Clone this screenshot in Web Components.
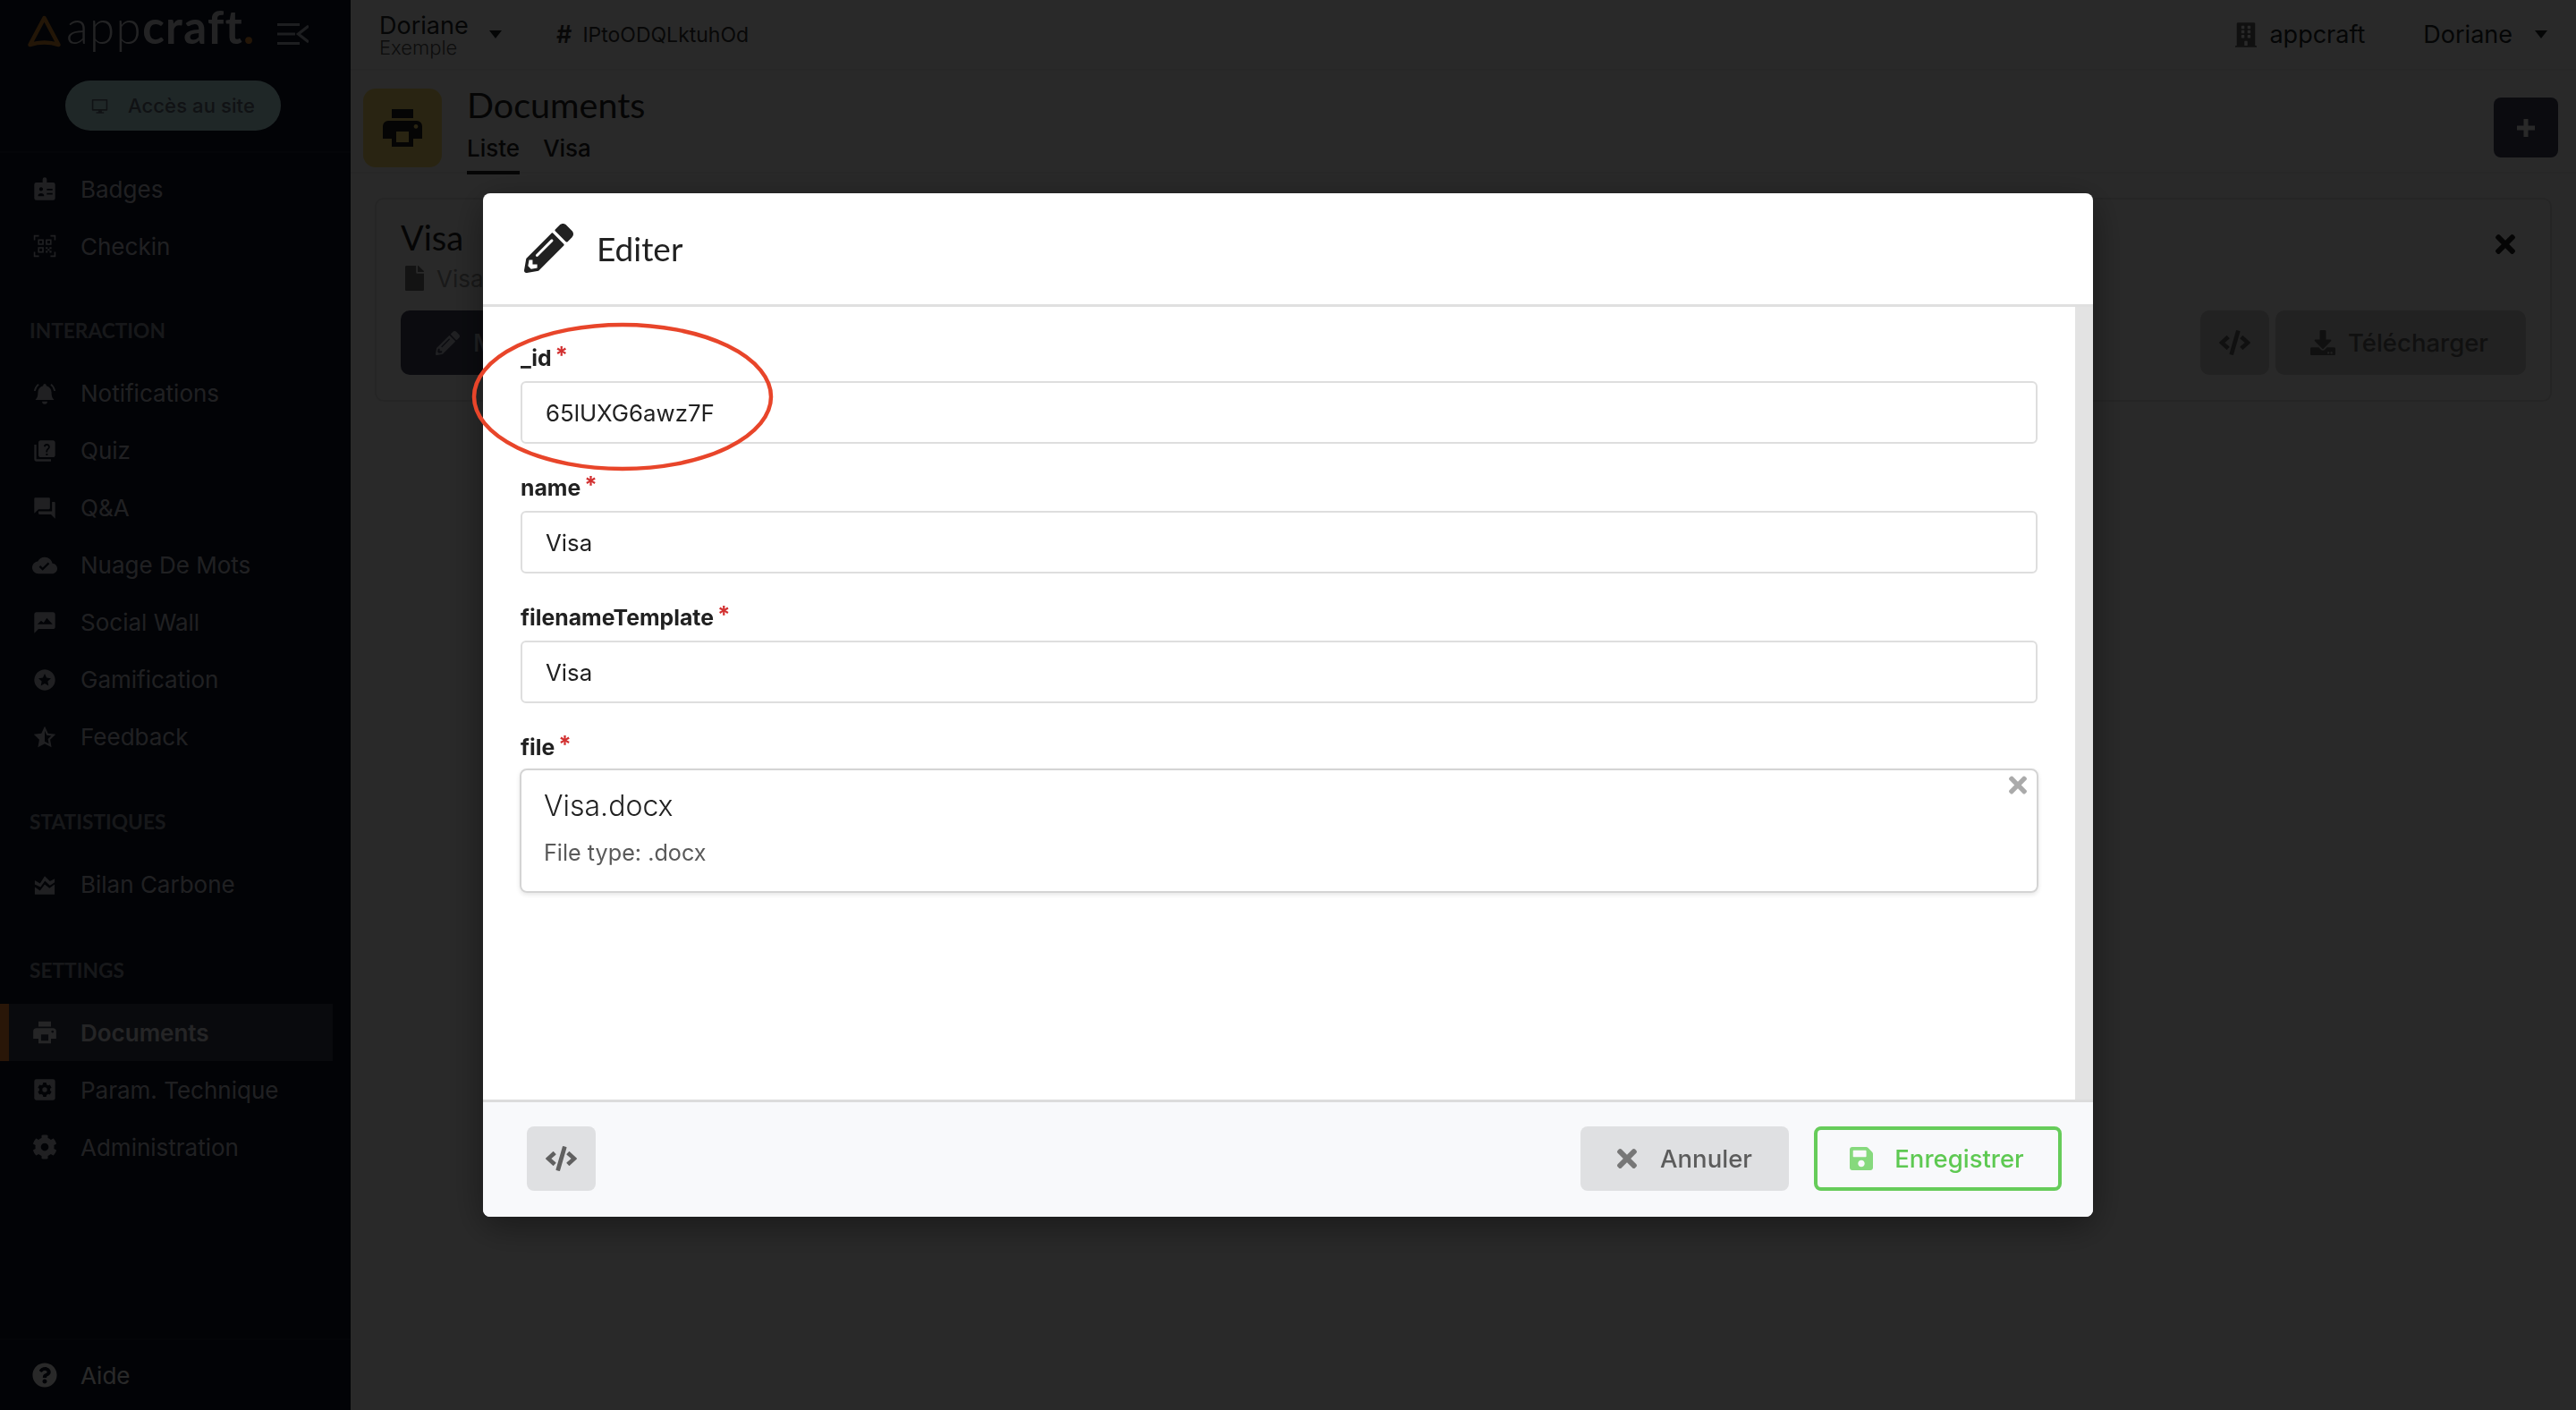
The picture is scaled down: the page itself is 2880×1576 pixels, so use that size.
<!DOCTYPE html>
<html lang="fr">
<head>
<meta charset="utf-8">
<title>Documents - appcraft</title>
<style>
  html, body { margin: 0; height: 100%; background: #fcfcfc; font-family: Inter, "Liberation Sans", sans-serif; }
</style>
</head>
<body>
<app-shell>
  <app-sidebar slot="sidebar">
    <nav-item icon="badge">Badges</nav-item>
    <nav-item icon="qr">Checkin</nav-item>
    <nav-section>INTERACTION</nav-section>
    <nav-item icon="bell">Notifications</nav-item>
    <nav-item icon="quiz">Quiz</nav-item>
    <nav-item icon="qa">Q&amp;A</nav-item>
    <nav-item icon="cloud">Nuage De Mots</nav-item>
    <nav-item icon="wall">Social Wall</nav-item>
    <nav-item icon="starcircle">Gamification</nav-item>
    <nav-item icon="starhalf">Feedback</nav-item>
    <nav-section>STATISTIQUES</nav-section>
    <nav-item icon="chart">Bilan Carbone</nav-item>
    <nav-section style="margin-top: 1.500px">SETTINGS</nav-section>
    <nav-item icon="print" active>Documents</nav-item>
    <nav-item icon="param">Param. Technique</nav-item>
    <nav-item icon="cog">Administration</nav-item>
    <nav-item icon="help" slot="footer" bright>Aide</nav-item>
  </app-sidebar>
  <top-bar></top-bar>
  <page-header></page-header>
  <doc-card></doc-card>
</app-shell>
<edit-modal>
  <form-field label="_id" value="65lUXG6awz7F"></form-field>
  <form-field label="name" value="Visa"></form-field>
  <form-field label="filenameTemplate" value="Visa"></form-field>
  <form-field label="file" filename="Visa.docx" filetype="File type: .docx"></form-field>
</edit-modal>

<script>
// icon set, viewBox first then the shapes
const ICONS = {
  times: ['0 0 352 512', '<path d="M242.72 256l100.07-100.07c12.28-12.28 12.28-32.19 0-44.48l-22.24-22.24c-12.28-12.28-32.19-12.28-44.48 0L176 189.28 75.93 89.21c-12.28-12.28-32.19-12.28-44.48 0L9.21 111.45c-12.28 12.28-12.28 32.19 0 44.48L109.28 256 9.21 356.07c-12.28 12.28-12.28 32.19 0 44.48l22.24 22.24c12.28 12.28 32.2 12.28 44.48 0L176 322.72l100.07 100.07c12.28 12.28 32.2 12.28 44.48 0l22.24-22.24c12.28-12.28 12.28-32.19 0-44.48L242.72 256z"/>'],
  pencil: ['0 0 512 512', '<path d="M497.9 142.1l-46.1 46.1c-4.7 4.7-12.3 4.7-17 0l-111-111c-4.7-4.7-4.7-12.3 0-17l46.1-46.1c18.7-18.7 49.1-18.7 67.9 0l60.1 60.1c18.8 18.7 18.8 49.1 0 67.9zM284.2 99.8L21.6 362.4.4 483.9c-2.9 16.4 11.4 30.6 27.8 27.8l121.5-21.3 262.6-262.6c4.7-4.7 4.7-12.3 0-17l-111-111c-4.8-4.7-12.4-4.7-17.1 0zM124.1 339.9c-5.5-5.5-5.5-14.3 0-19.8l154-154c5.5-5.5 14.3-5.5 19.8 0s5.5 14.3 0 19.8l-154 154c-5.5 5.5-14.3 5.5-19.8 0zM88 424h48v36.3l-64.5 11.3-31.1-31.1L51.7 376H88v48z"/>'],
  save: ['0 0 448 512', '<path d="M433.941 129.941l-83.882-83.882A48 48 0 0 0 316.118 32H48C21.49 32 0 53.49 0 80v352c0 26.51 21.49 48 48 48h352c26.51 0 48-21.49 48-48V163.882a48 48 0 0 0-14.059-33.941zM224 416c-35.346 0-64-28.654-64-64 0-35.346 28.654-64 64-64s64 28.654 64 64c0 35.346-28.654 64-64 64zm96-304.52V212c0 6.627-5.373 12-12 12H76c-6.627 0-12-5.373-12-12V108c0-6.627 5.373-12 12-12h228.52c3.183 0 6.235 1.264 8.485 3.515l3.48 3.48A11.996 11.996 0 0 1 320 111.48z"/>'],
  code: ['0 0 640 512', '<path d="M278.9 511.5l-61-17.7c-6.4-1.8-10-8.5-8.2-14.9L346.2 8.7c1.8-6.4 8.5-10 14.9-8.2l61 17.7c6.4 1.8 10 8.5 8.2 14.9L293.8 503.3c-1.9 6.4-8.5 10.1-14.9 8.2zm-114-112.2l43.5-46.4c4.6-4.9 4.3-12.7-.8-17.2L117 256l90.6-79.7c5.1-4.5 5.5-12.3.8-17.2l-43.5-46.4c-4.5-4.8-12.1-5.1-17-.5L3.8 247.2c-5.1 4.7-5.1 12.8 0 17.5l144.1 135.1c4.9 4.6 12.5 4.4 17-.5zm327.2.6l144.1-135.1c5.1-4.7 5.1-12.8 0-17.5L492.1 112.1c-4.8-4.5-12.4-4.3-17 .5L431.6 159c-4.6 4.9-4.3 12.7.8 17.2L523 256l-90.6 79.7c-5.1 4.5-5.5 12.3-.8 17.2l43.5 46.4c4.5 4.9 12.1 5.1 17 .6z"/>'],
  download: ['0 0 512 512', '<path d="M216 0h80c13.3 0 24 10.7 24 24v168h87.7c17.8 0 26.7 21.5 14.1 34.1L269.7 378.3c-7.5 7.5-19.8 7.5-27.3 0L90.1 226.1c-12.6-12.6-3.7-34.1 14.1-34.1H192V24c0-13.3 10.7-24 24-24zm296 376v112c0 13.3-10.7 24-24 24H24c-13.3 0-24-10.7-24-24V376c0-13.3 10.7-24 24-24h146.7l49 49c20.1 20.1 52.5 20.1 72.6 0l49-49H488c13.3 0 24 10.7 24 24zm-124 88c0-11-9-20-20-20s-20 9-20 20 9 20 20 20 20-9 20-20zm64 0c0-11-9-20-20-20s-20 9-20 20 9 20 20 20 20-9 20-20z"/>'],
  help: ['0 0 512 512', '<path d="M504 256c0 136.997-111.043 248-248 248S8 392.997 8 256C8 119.083 119.043 8 256 8s248 111.083 248 248zM262.655 90c-54.497 0-89.255 22.957-116.549 63.758-3.536 5.286-2.353 12.415 2.715 16.258l34.699 26.31c5.205 3.947 12.621 3.008 16.665-2.122 17.864-22.658 30.113-35.797 57.303-35.797 20.429 0 45.698 13.148 45.698 32.958 0 14.976-12.363 22.667-32.534 33.976C247.128 238.528 216 254.941 216 296v4c0 6.627 5.373 12 12 12h56c6.627 0 12-5.373 12-12v-1.333c0-28.462 83.186-29.647 83.186-106.667 0-58.002-60.165-102-116.531-102zM256 338c-25.365 0-46 20.635-46 46 0 25.364 20.635 46 46 46s46-20.636 46-46c0-25.365-20.635-46-46-46z"/>'],
  cog: ['0 0 512 512', '<path d="M487.4 315.7l-42.6-24.6c4.3-23.2 4.3-47 0-70.2l42.6-24.6c4.9-2.8 7.1-8.6 5.5-14-11.1-35.6-30-67.8-54.7-94.6-3.8-4.1-10-5.1-14.8-2.3L380.8 110c-17.9-15.4-38.5-27.3-60.8-35.1V25.8c0-5.6-3.9-10.5-9.4-11.7-36.7-8.2-74.3-7.8-109.2 0-5.5 1.2-9.4 6.1-9.4 11.7V75c-22.2 7.9-42.8 19.8-60.8 35.1L88.7 85.5c-4.9-2.8-11-1.9-14.8 2.3-24.7 26.7-43.6 58.9-54.7 94.6-1.7 5.4.6 11.2 5.5 14L67.3 221c-4.3 23.2-4.3 47 0 70.2l-42.6 24.6c-4.9 2.8-7.1 8.6-5.5 14 11.1 35.6 30 67.8 54.7 94.6 3.8 4.1 10 5.1 14.8 2.3l42.6-24.6c17.9 15.4 38.5 27.3 60.8 35.1v49.2c0 5.6 3.9 10.5 9.4 11.7 36.7 8.2 74.3 7.8 109.2 0 5.5-1.2 9.4-6.1 9.4-11.7v-49.2c22.2-7.9 42.8-19.8 60.8-35.1l42.6 24.6c4.9 2.8 11 1.9 14.8-2.3 24.7-26.7 43.6-58.9 54.7-94.6 1.5-5.5-.7-11.3-5.6-14.1zM256 336c-44.1 0-80-35.9-80-80s35.9-80 80-80 80 35.9 80 80-35.9 80-80 80z"/>'],
  file: ['0 0 384 512', '<path d="M224 136V0H24C10.7 0 0 10.7 0 24v464c0 13.3 10.7 24 24 24h336c13.3 0 24-10.7 24-24V160H248c-13.2 0-24-10.8-24-24zm160-14.1v6.1H256V0h6.1c6.4 0 12.5 2.5 17 7l97.9 98c4.5 4.5 7 10.6 7 16.9z"/>'],
  building: ['0 0 448 512', '<path d="M436 480h-20V24c0-13.255-10.745-24-24-24H56C42.745 0 32 10.745 32 24v456H12c-6.627 0-12 5.373-12 12v20h448v-20c0-6.627-5.373-12-12-12zM128 76c0-6.627 5.373-12 12-12h40c6.627 0 12 5.373 12 12v40c0 6.627-5.373 12-12 12h-40c-6.627 0-12-5.373-12-12V76zm0 96c0-6.627 5.373-12 12-12h40c6.627 0 12 5.373 12 12v40c0 6.627-5.373 12-12 12h-40c-6.627 0-12-5.373-12-12v-40zm52 148h-40c-6.627 0-12-5.373-12-12v-40c0-6.627 5.373-12 12-12h40c6.627 0 12 5.373 12 12v40c0 6.627-5.373 12-12 12zm76 160h-64v-84c0-6.627 5.373-12 12-12h40c6.627 0 12 5.373 12 12v84zm64-172c0 6.627-5.373 12-12 12h-40c-6.627 0-12-5.373-12-12v-40c0-6.627 5.373-12 12-12h40c6.627 0 12 5.373 12 12v40zm0-96c0 6.627-5.373 12-12 12h-40c-6.627 0-12-5.373-12-12v-40c0-6.627 5.373-12 12-12h40c6.627 0 12 5.373 12 12v40zm0-96c0 6.627-5.373 12-12 12h-40c-6.627 0-12-5.373-12-12V76c0-6.627 5.373-12 12-12h40c6.627 0 12 5.373 12 12v40z"/>'],
  plus: ['0 0 24 24', '<path d="M9.5 2h5v7.5H22v5h-7.5V22h-5v-7.5H2v-5h7.5z"/>'],
  print: ['0 0 24 24', '<path fill-rule="evenodd" d="M6 1.5h12v5H6zM4 8h16a3 3 0 0 1 3 3v7h-5v4.500H6V18H1v-7a3 3 0 0 1 3-3zM8.500 14v6h7v-6zM19.500 10a1.200 1.200 0 1 0 .01 0z"/>'],
  badge: ['0 0 24 24', '<path fill-rule="evenodd" d="M4 6h6V3a2 2 0 0 1 4 0v3h6a2 2 0 0 1 2 2v13a2 2 0 0 1-2 2H4a2 2 0 0 1-2-2V8a2 2 0 0 1 2-2zM8.500 10.500a1.800 1.800 0 1 0 .01 0zM5.500 19c0-3.500 6-3.500 6 0zM14 12h5.500v1.500H14zM14 16h5.500v1.500H14z"/>'],
  qr: ['0 0 24 24', '<path fill-rule="evenodd" d="M1.500 1.500h5v1.400H2.900v3.600H1.500zM22.500 1.500v5h-1.400V2.900h-3.600V1.500zM1.500 22.500v-5h1.400v3.600h3.600v1.400zM22.500 22.500h-5v-1.400h3.600v-3.600h1.400zM5.500 5.500h5.500V11H5.500zM6.900 6.900v2.700h2.700V6.900zM13 5.500h5.500V11H13zM14.400 6.900v2.700h2.700V6.900zM5.500 13H11v5.500H5.500zM6.900 14.400v2.700h2.700v-2.700zM13 13h1.800v1.800H13zM16.600 13h1.900v1.800h-1.900zM14.800 14.800h1.800v1.800h-1.800zM13 16.600h1.800v1.900H13zM16.600 16.600h1.900v1.900h-1.900z"/>'],
  bell: ['0 0 24 24', '<path d="M12 2.500A1.500 1.500 0 0 1 13.500 4v.4A6.500 6.500 0 0 1 18.500 11c0 4 1 5.500 2.500 7H3c1.500-1.500 2.500-3 2.500-7a6.500 6.500 0 0 1 5-6.600V4A1.500 1.500 0 0 1 12 2.500zM9.500 19.500h5a2.500 2.500 0 0 1-5 0zM5.500 2.500l1.100 1.100A9 9 0 0 0 3.200 9.500H1.700a10.500 10.500 0 0 1 3.800-7zM18.500 2.500l-1.100 1.100a9 9 0 0 1 3.400 5.900h1.500a10.500 10.500 0 0 0-3.800-7z"/>'],
  quiz: ['0 0 24 24', '<path fill-rule="evenodd" d="M4 6H2v14c0 1.100.9 2 2 2h14v-2H4zM20 2H8c-1.100 0-2 .9-2 2v12c0 1.100.9 2 2 2h12c1.100 0 2-.9 2-2V4c0-1.100-.9-2-2-2zM13.200 14.600h1.700v1.700h-1.700zM11 7.800a3 3 0 1 1 5 2.500c-.9.800-1.300 1.100-1.300 2.900h-1.600c0-2.200.7-2.900 1.700-3.800a1.400 1.400 0 1 0-2.200-1.300z"/>'],
  qa: ['0 0 24 24', '<path d="M21 6h-2v9H6v2c0 .55.45 1 1 1h11l4 4V7c0-.55-.45-1-1-1zm-4 6V3c0-.55-.45-1-1-1H3c-.55 0-1 .45-1 1v14l4-4h10c.55 0 1-.45 1-1z"/>'],
  cloud: ['0 0 24 24', '<path d="M19.350 10.040C18.670 6.590 15.640 4 12 4 9.110 4 6.600 5.640 5.350 8.040 2.340 8.360 0 10.910 0 14c0 3.310 2.690 6 6 6h13c2.760 0 5-2.240 5-5 0-2.640-2.050-4.780-4.650-4.960zM10 17l-3.500-3.500 1.410-1.410L10 14.170 15.180 9l1.410 1.410L10 17z"/>'],
  wall: ['0 0 24 24', '<path fill-rule="evenodd" d="M20 2H4c-1.100 0-2 .9-2 2v18l4-4h14c1.100 0 2-.9 2-2V4c0-1.100-.9-2-2-2zM5 13.500l3.500-3.500 2.500 2 3-4.500 5.500 6z"/>'],
  starcircle: ['0 0 24 24', '<path fill-rule="evenodd" d="M12 2a10 10 0 1 0 .01 0zM12 6l1.800 3.900 4.200.5-3.100 2.900.8 4.200-3.700-2.100-3.700 2.100.8-4.200L6 10.400l4.200-.5z"/>'],
  starhalf: ['0 0 24 24', '<path fill-rule="evenodd" d="M12 1.500l3.200 6.800 7.300 1-5.300 5.100 1.300 7.300-6.500-3.400-6.500 3.400 1.300-7.300-5.300-5.100 7.300-1zM12 5.700v10.400l3.900 2.100-.8-4.400 3.200-3.100-4.400-.6z"/>'],
  chart: ['0 0 24 24', '<path d="M2.500 22v-7l5 3.500 4.500-6 4.500 3.500 5-3.500V22zM2.500 12.500v-4l5 3 4.500-7 5 5 4.500-2.500v3.500l-4.500 3-4.800-4.500-4.200 6z"/>'],
  param: ['0 0 24 24', '<path d="M4 2h16a2 2 0 0 1 2 2v16a2 2 0 0 1-2 2H4a2 2 0 0 1-2-2V4a2 2 0 0 1 2-2z"/><path fill="#0d1325" transform="translate(5 5) scale(.0273)" d="M487.400 315.700l-42.600-24.600c4.300-23.200 4.300-47 0-70.200l42.600-24.600c4.900-2.800 7.100-8.600 5.500-14-11.100-35.600-30-67.800-54.700-94.600-3.800-4.100-10-5.100-14.800-2.300L380.800 110c-17.900-15.400-38.500-27.300-60.800-35.100V25.800c0-5.600-3.900-10.500-9.400-11.700-36.700-8.200-74.300-7.800-109.200 0-5.500 1.200-9.400 6.100-9.400 11.700V75c-22.200 7.900-42.800 19.800-60.800 35.100L88.700 85.500c-4.900-2.800-11-1.900-14.800 2.300-24.700 26.700-43.600 58.900-54.700 94.600-1.700 5.400.6 11.200 5.500 14L67.300 221c-4.300 23.200-4.300 47 0 70.200l-42.600 24.600c-4.900 2.800-7.100 8.600-5.500 14 11.100 35.600 30 67.800 54.700 94.600 3.800 4.100 10 5.100 14.800 2.300l42.600-24.600c17.900 15.400 38.500 27.300 60.800 35.100v49.200c0 5.600 3.900 10.500 9.400 11.700 36.700 8.200 74.300 7.800 109.200 0 5.500-1.200 9.400-6.100 9.400-11.700v-49.200c22.200-7.900 42.800-19.800 60.800-35.100l42.600 24.600c4.900 2.800 11 1.900 14.800-2.300 24.700-26.700 43.600-58.900 54.700-94.600 1.500-5.500-.7-11.300-5.600-14.100z"/><circle cx="12" cy="12" r="2.300"/>'],
  desktop: ['0 0 24 24', '<path fill-rule="evenodd" d="M2 2.500h20a1 1 0 0 1 1 1v14a1 1 0 0 1-1 1h-7v2h3v2H7v-2h3v-2H2a1 1 0 0 1-1-1v-14a1 1 0 0 1 1-1zM3 4.500v12h18v-12z"/>']
};

class UiIcon extends HTMLElement {
  constructor() {
    super();
    this.attachShadow({ mode: 'open' });
  }
  connectedCallback() {
    const [box, shapes] = ICONS[this.getAttribute('name')];
    const w = this.getAttribute('w') || 24;
    const h = this.getAttribute('h') || w;
    this.shadowRoot.innerHTML = `
      <style>
        :host { display: inline-flex; flex: none; line-height: 0; }
        svg { width: ${w}px; height: ${h}px; fill: currentColor; }
      </style>
      <svg viewBox="${box}" aria-hidden="true">${shapes}</svg>`;
  }
}

const shellTemplate = document.createElement('template');
shellTemplate.innerHTML = `
  <style>
    :host { display: grid; grid-template-columns: 392px 1fr; grid-template-rows: 79px 115px 1fr; height: 100vh; overflow: hidden; }
    ::slotted([slot="sidebar"]) { grid-row: 1 / 4; }
  </style>
  <slot name="sidebar"></slot>
  <slot></slot>
`;
class AppShell extends HTMLElement {
  constructor() {
    super();
    this.attachShadow({ mode: 'open' }).appendChild(shellTemplate.content.cloneNode(true));
  }
}

const sidebarTemplate = document.createElement('template');
sidebarTemplate.innerHTML = `
  <style>
    :host { display: flex; flex-direction: column; background: #0d1325; color: #c5c9d5; height: 1576px; box-sizing: border-box; }
    .head { height: 171px; box-sizing: border-box; border-bottom: 2px solid #1b2133; flex: none; }
    .brand { display: flex; align-items: flex-start; height: 90px; padding: 16px 0 0 30px; box-sizing: border-box; }
    .brand .mark { width: 39px; height: 39px; flex: none; }
    .word { font: 300 51px/44px Lato, sans-serif; color: #d8dae0; margin: -8px 0 0 5px; letter-spacing: 1.400px; white-space: nowrap; width: 236px; }
    .word b { font-weight: 700; }
    .word i { font-style: normal; font-weight: 700; color: #e08a30; }
    .burger { width: 35px; height: 24px; margin: 10px 0 0 0; flex: none; }
    .site { display: flex; align-items: center; width: 241px; height: 56px; margin-left: 73px; border-radius: 28px; background: #c3eef3; color: #66707e; font-size: 22px; font-weight: 500; box-sizing: border-box; padding-left: 29px; gap: 22px; white-space: nowrap; letter-spacing: .1px; }
    nav { flex: 1; padding-top: 8px; }
    .foot { height: 80px; flex: none; border-top: 2px solid #1b2133; box-sizing: border-box; padding-top: 7px; }
  </style>
  <div class="head">
    <div class="brand">
      <svg class="mark" viewBox="0 0 39 39"><path d="M19.500 4 L35.500 34 Q19.500 29 3.500 34 Z" fill="none" stroke="#d98a2c" stroke-width="4.500" stroke-linejoin="round"/></svg>
      <div class="word">app<b>craft</b><i>.</i></div>
      <svg class="burger" viewBox="0 0 35 24"><path d="M0 1.500h25M0 12h20M0 22.500h25M35 3 23.500 12 35 21" fill="none" stroke="#b4b8c6" stroke-width="3.200"/></svg>
    </div>
    <div class="site"><ui-icon name="desktop" w="19"></ui-icon>Accès au site</div>
  </div>
  <nav><slot></slot></nav>
  <div class="foot"><slot name="footer"></slot></div>
`;
class AppSidebar extends HTMLElement {
  constructor() {
    super();
    this.attachShadow({ mode: 'open' }).appendChild(sidebarTemplate.content.cloneNode(true));
  }
}

class NavSection extends HTMLElement {
  constructor() {
    super();
    this.attachShadow({ mode: 'open' }).innerHTML = `
      <style>
        :host { display: block; height: 100.500px; box-sizing: border-box; padding: 45px 0 0 33px; font: 700 22.700px/36px Lato, sans-serif; color: #8f93a1; }
      </style><slot></slot>`;
  }
}

class NavItem extends HTMLElement {
  constructor() {
    super();
    this.attachShadow({ mode: 'open' });
  }
  connectedCallback() {
    this.shadowRoot.innerHTML = `
      <style>
        :host { display: flex; align-items: center; height: 64px; width: 372px; box-sizing: border-box; padding-left: 36px; font-size: 26px; color: #c5c9d5; }
        :host([active]) { background: #383e51; box-shadow: inset 10px 0 0 #ff8a32; color: #e4e6ec; font-weight: 600; }
        :host([bright]) { color: #fff; }
        ui-icon { margin-right: 26px; }
      </style>
      <ui-icon name="${this.getAttribute('icon')}" w="28"></ui-icon><slot></slot>`;
  }
}

const topBarTemplate = document.createElement('template');
topBarTemplate.innerHTML = `
  <style>
    :host { display: flex; align-items: center; height: 79px; box-sizing: border-box; background: #fff; border-bottom: 2px solid #f2f2f2; padding: 0 32px; color: #212529; font-size: 27px; white-space: nowrap; }
    .who { display: flex; flex-direction: column; width: 123px; line-height: 30px; }
    .who small { font: 300 22px/22px Inter, sans-serif; color: #555; margin-top: -2px; }
    .caret { width: 0; height: 0; border: 7px solid transparent; border-top: 9px solid #212529; border-bottom: 0; }
    .ref { margin-left: 61px; font-size: 23px; color: #333; display: flex; align-items: center; gap: 12px; }
    .ref b { font-size: 27px; font-weight: 600; }
    .right { margin-left: auto; display: flex; align-items: center; }
    .right ui-icon { margin-right: 14px; color: #666; }
    .org { margin-right: 65px; }
    .right .caret { margin-left: 25px; }
  </style>
  <div class="who"><span>Doriane</span><small>Exemple</small></div>
  <span class="caret"></span>
  <span class="ref"><b>#</b><span>IPtoODQLktuhOd</span></span>
  <div class="right">
    <ui-icon name="building" w="24" h="28"></ui-icon><span class="org">appcraft</span>
    <span>Doriane</span><span class="caret"></span>
  </div>
`;
class TopBar extends HTMLElement {
  constructor() {
    super();
    this.attachShadow({ mode: 'open' }).appendChild(topBarTemplate.content.cloneNode(true));
  }
}

const headerTemplate = document.createElement('template');
headerTemplate.innerHTML = `
  <style>
    :host { display: flex; align-items: flex-start; height: 115px; box-sizing: border-box; padding: 20px 20px 0 14px; border-bottom: 2px solid #f2f2f2; background: #fff; color: #212121; }
    .tile { width: 88px; height: 88px; border-radius: 14px; background: #ffe16e; display: flex; align-items: center; justify-content: center; flex: none; color: #202020; }
    .text { margin-left: 28px; display: flex; flex-direction: column; }
    h1 { margin: -4px 0 0; font: 400 39.500px/44px Lato, sans-serif; }
    .tabs { display: flex; gap: 26px; margin-top: 9px; font-size: 26px; font-weight: 500; }
    .tabs span { display: block; height: 47px; line-height: 36px; box-sizing: border-box; }
    .tabs .on { border-bottom: 4px solid #212121; }
    .add { margin-left: auto; margin-top: 10px; width: 72px; height: 67px; background: #45475f; border-radius: 8px; color: #fff; display: flex; align-items: center; justify-content: center; }
  </style>
  <div class="tile"><ui-icon name="print" w="48"></ui-icon></div>
  <div class="text">
    <h1>Documents</h1>
    <div class="tabs"><span class="on">Liste</span><span>Visa</span></div>
  </div>
  <div class="add"><ui-icon name="plus" w="24"></ui-icon></div>
`;
class PageHeader extends HTMLElement {
  constructor() {
    super();
    this.attachShadow({ mode: 'open' }).appendChild(headerTemplate.content.cloneNode(true));
  }
}

const cardTemplate = document.createElement('template');
cardTemplate.innerHTML = `
  <style>
    :host { display: block; margin: 27px 27px 0 27px; height: 228px; box-sizing: border-box; border: 2px solid #e6e6e6; border-radius: 10px; padding: 20px 27px; background: #fff; color: #212121; position: relative; }
    h2 { margin: 0; font: 400 38px/44px Lato, sans-serif; }
    .sub { display: flex; align-items: center; gap: 14px; font-size: 26px; margin-top: 8px; color: #999; height: 32px; padding-left: 5px; }
    .sub ui-icon { color: #777; }
    .row { display: flex; gap: 7px; margin-top: 20px; height: 72px; }
    .btn { display: flex; align-items: center; justify-content: center; height: 72px; border-radius: 10px; font-size: 27.500px; font-weight: 500; color: #666; background: #d0d0d0; box-sizing: border-box; }
    .edit { background: #45475f; color: #c5c9d5; width: 300px; margin-right: auto; gap: 15px; justify-content: flex-start; padding-left: 39px; }
    .code { width: 77px; }
    .dl { width: 280px; gap: 14px; padding-right: 3px; }
    .close { position: absolute; right: 39px; top: 34px; color: #212121; }
  </style>
  <h2>Visa</h2>
  <div class="sub"><ui-icon name="file" w="21" h="28"></ui-icon>Visa</div>
  <div class="row">
    <div class="btn edit"><ui-icon name="pencil" w="27"></ui-icon>M</div>
    <div class="btn code"><ui-icon name="code" w="35" h="28"></ui-icon></div>
    <div class="btn dl"><ui-icon name="download" w="28"></ui-icon>Télécharger</div>
  </div>
  <ui-icon class="close" name="times" w="22" h="32"></ui-icon>
`;
class DocCard extends HTMLElement {
  constructor() {
    super();
    this.attachShadow({ mode: 'open' }).appendChild(cardTemplate.content.cloneNode(true));
  }
}

class FormField extends HTMLElement {
  constructor() {
    super();
    this.attachShadow({ mode: 'open' });
  }
  connectedCallback() {
    const name = this.getAttribute('filename');
    const body = name
      ? `<div class="filecard">
           <div class="fname">${name}</div>
           <div class="ftype">${this.getAttribute('filetype')}</div>
           <ui-icon class="x" name="times" w="20" h="29"></ui-icon>
         </div>`
      : `<div class="input">${this.getAttribute('value')}</div>`;
    this.shadowRoot.innerHTML = `
      <style>
        :host { display: block; margin-bottom: 34px; }
        label { display: block; font-size: 24.800px; font-weight: 700; line-height: 30px; color: #212121; margin-bottom: 11px; }
        label sup { color: #d23030; font-size: 26px; line-height: 0; vertical-align: 3px; margin-left: 4px; font-weight: 700; }
        .input { height: 70px; box-sizing: border-box; border: 2px solid #dedede; border-radius: 6px; padding: 0 26px; display: flex; align-items: center; font-size: 25.800px; color: #212121; }
        .filecard { position: relative; height: 139px; margin: -2px -1px 0; box-sizing: border-box; border: 2px solid #d4d4d4; border-radius: 8px; box-shadow: 0 2px 5px rgba(0,0,0,.1); padding: 19px 25px; color: #212121; }
        .fname { font-size: 32px; font-weight: 300; line-height: 42px; }
        .ftype { font-size: 25.200px; line-height: 34px; color: #5a5a5a; margin-top: 14px; }
        .x { position: absolute; right: 11px; top: 2px; color: #aaa; }
      </style>
      <label>${this.getAttribute('label')}<sup>*</sup></label>
      ${body}`;
  }
}

const modalTemplate = document.createElement('template');
modalTemplate.innerHTML = `
  <style>
    :host { position: fixed; inset: 0; display: flex; align-items: center; justify-content: center; background: rgba(0,0,0,.84); font-family: Inter, "Liberation Sans", sans-serif; }
    .modal { position: relative; width: 1800px; height: 1144px; background: #fff; border-radius: 8px; display: flex; flex-direction: column; box-shadow: 0 10px 40px rgba(0,0,0,.4); }
    header { height: 127px; flex: none; box-sizing: border-box; border-bottom: 3px solid #e0e0e0; display: flex; align-items: center; padding: 0 0 2px 46px; gap: 26px; color: #212121; font: 400 37px Lato, sans-serif; }
    .body { flex: 1; display: flex; min-height: 0; }
    .form { flex: 1; padding: 42px 42px 0; min-width: 0; }
    .track { width: 20px; background: #e3e3e3; flex: none; }
    footer { height: 131px; flex: none; box-sizing: border-box; border-top: 3px solid #dcdcdc; background: #f8f9fb; border-radius: 0 0 8px 8px; display: flex; align-items: center; padding: 0 35px 2px 49px; gap: 28px; }
    .btn { height: 72px; box-sizing: border-box; border-radius: 8px; background: #dfe0e2; color: #5c5c5c; font-size: 27.500px; font-weight: 500; display: flex; align-items: center; justify-content: center; gap: 26px; }
    .btn ui-icon { color: #777; }
    .code { width: 77px; margin-right: auto; }
    .code ui-icon { color: #606060; }
    .cancel { width: 233px; }
    .save { width: 277px; background: none; border: 4px solid #66cc5a; color: #5ec952; gap: 24px; padding-right: 2px; }
    .save ui-icon { color: #86d97d; }
    .ring { position: absolute; left: -13px; top: 144px; width: 338px; height: 167px; pointer-events: none; }
  </style>
  <div class="modal">
    <header><ui-icon name="pencil" w="55"></ui-icon>Editer</header>
    <div class="body">
      <div class="form"><slot></slot></div>
      <div class="track"></div>
    </div>
    <footer>
      <div class="btn code"><ui-icon name="code" w="35" h="28"></ui-icon></div>
      <div class="btn cancel"><ui-icon name="times" w="22" h="32"></ui-icon>Annuler</div>
      <div class="btn save"><ui-icon name="save" w="26" h="30"></ui-icon>Enregistrer</div>
    </footer>
    <svg class="ring" viewBox="0 0 338 167"><ellipse cx="169" cy="83.500" rx="166" ry="80.500" fill="none" stroke="#e8452a" stroke-width="4.500"/></svg>
  </div>
`;
class EditModal extends HTMLElement {
  constructor() {
    super();
    this.attachShadow({ mode: 'open' }).appendChild(modalTemplate.content.cloneNode(true));
  }
}

customElements.define('ui-icon', UiIcon);
customElements.define('app-shell', AppShell);
customElements.define('app-sidebar', AppSidebar);
customElements.define('nav-section', NavSection);
customElements.define('nav-item', NavItem);
customElements.define('top-bar', TopBar);
customElements.define('page-header', PageHeader);
customElements.define('doc-card', DocCard);
customElements.define('form-field', FormField);
customElements.define('edit-modal', EditModal);
</script>
</body>
</html>
